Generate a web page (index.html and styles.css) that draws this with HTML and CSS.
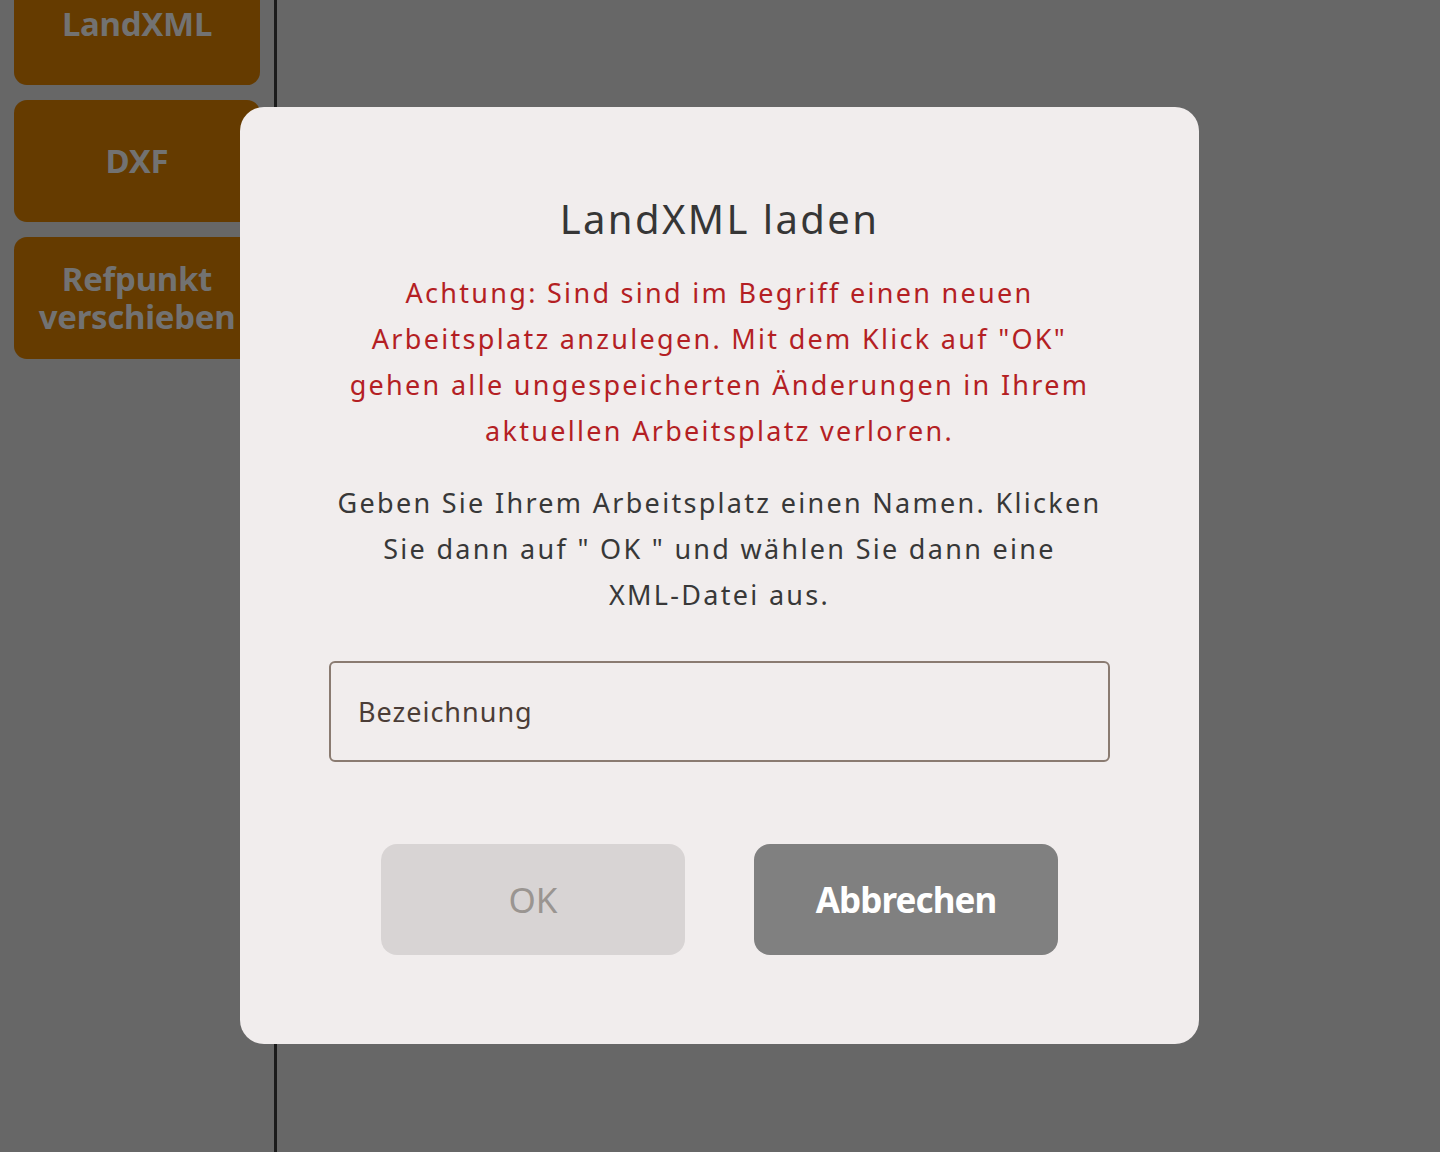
FILE: index.html
```html
<!DOCTYPE html>
<html lang="de">
<head>
<meta charset="utf-8">
<link rel="stylesheet" href="styles.css">
</head>
<body>
<div class="app">
  <aside class="sidebar">
    <div class="side-btn first">LandXML</div>
    <div class="side-btn">DXF</div>
    <div class="side-btn">Refpunkt<br>verschieben</div>
  </aside>
  <main class="main"></main>
</div>
<div class="overlay">
  <div class="modal">
    <h1 class="title">LandXML laden</h1>
    <p class="warn">Achtung: Sind sind im Begriff einen neuen<br>Arbeitsplatz anzulegen. Mit dem Klick auf "OK"<br>gehen alle ungespeicherten Änderungen in Ihrem<br>aktuellen Arbeitsplatz verloren.</p>
    <p class="info">Geben Sie Ihrem Arbeitsplatz einen Namen. Klicken<br>Sie dann auf " OK " und wählen Sie dann eine<br>XML-Datei aus.</p>
    <input class="field" type="text" placeholder="Bezeichnung">
    <div class="actions">
      <button class="btn btn-ok" disabled>OK</button>
      <button class="btn btn-cancel">Abbrechen</button>
    </div>
  </div>
</div>
</body>
</html>
```

FILE: styles.css
```css
html, body {
  margin: 0;
  padding: 0;
  height: 100%;
}
body {
  background: #676767;
  font-family: "Noto Sans", "DejaVu Sans", sans-serif;
  overflow: hidden;
}
.app {
  display: flex;
  height: 1152px;
}
.sidebar {
  width: 277px;
  border-right: 3px solid #1b1b1b;
  display: flex;
  flex-direction: column;
  gap: 15px;
  padding-left: 14px;
  box-sizing: border-box;
}
.side-btn {
  width: 246px;
  height: 122px;
  border-radius: 13px;
  background: #653b00;
  color: #727272;
  font-weight: 700;
  font-size: 33px;
  line-height: 38px;
  display: flex;
  align-items: center;
  justify-content: center;
  text-align: center;
  letter-spacing: -0.3px;
}
.side-btn.first {
  margin-top: -37px;
}
.main {
  flex: 1;
}
.overlay {
  position: fixed;
  inset: 0;
  display: flex;
  align-items: flex-start;
  justify-content: center;
  padding-top: 107px;
}
.modal {
  width: 959px;
  height: 937px;
  box-sizing: border-box;
  background: #f1eded;
  border-radius: 24px;
  padding: 87px 89px 0;
  display: flex;
  flex-direction: column;
  align-items: center;
  margin-left: -1px;
}
.title {
  margin: 0;
  font-size: 40px;
  line-height: 50px;
  font-weight: 400;
  color: #363636;
  letter-spacing: 2.4px;
}
.warn, .info {
  margin: 26px 0 0;
  font-size: 27px;
  line-height: 46px;
  text-align: center;
  letter-spacing: 2.3px;
  white-space: nowrap;
}
.warn {
  color: #b41f24;
}
.info {
  color: #383838;
}
.field {
  margin-top: 43px;
  width: 781px;
  height: 101px;
  box-sizing: border-box;
  border: 2px solid #8a7b71;
  border-radius: 6px;
  background: transparent;
  padding: 0 27px;
  font-family: inherit;
  font-size: 27px;
  letter-spacing: 1px;
  outline: none;
}
.field::placeholder {
  color: #4b3d37;
  opacity: 1;
}
.actions {
  margin-top: 82px;
  display: flex;
  gap: 69px;
}
.btn {
  width: 304px;
  height: 111px;
  border: none;
  border-radius: 16px;
  font-family: inherit;
  font-size: 35px;
  padding: 0;
}
.btn-ok {
  background: #d8d4d4;
  color: #9a9591;
}
.btn-cancel {
  background: #808080;
  color: #ffffff;
  font-weight: 700;
  letter-spacing: -0.9px;
}
```
